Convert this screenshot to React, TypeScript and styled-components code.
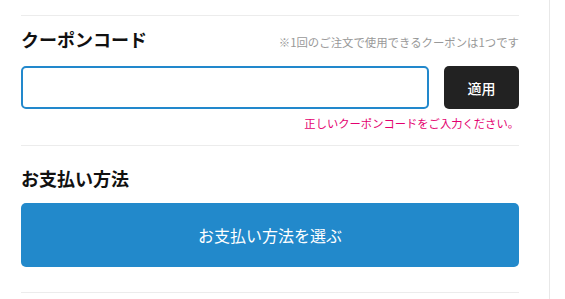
import React from 'react';
import styled, { createGlobalStyle } from 'styled-components';

const GlobalStyle = createGlobalStyle`
	* {
		box-sizing: border-box;
	}

	body {
		margin: 0;
		background: #fff;
		font-family: 'Noto Sans CJK JP', 'Noto Sans', sans-serif;
		color: #111;
	}
`;

const Page = styled.div`
	display: flex;
	height: 299px;
	overflow: hidden;
`;

const Main = styled.main`
	width: 550px;
	padding: 15px 30px 0 21px;
	border-right: 1px solid #e8e8e8;
`;

const Divider = styled.hr`
	margin: 0;
	border: none;
	border-top: 1px solid #ececec;
`;

const Section = styled.section<{ $top: number; $bottom: number }>`
	padding: ${p => p.$top}px 0 ${p => p.$bottom}px;
`;

const SectionHeader = styled.div`
	display: flex;
	justify-content: space-between;
	align-items: baseline;
`;

const Title = styled.h2`
	margin: 0;
	font-size: 18px;
	line-height: 24px;
	font-weight: 700;
	color: #111;
`;

const Note = styled.span`
	font-size: 11.4px;
	line-height: 16px;
	color: #999;
`;

const CouponRow = styled.div`
	display: flex;
	gap: 15px;
	margin-top: 15px;
`;

const CouponInput = styled.input`
	flex: 1;
	height: 43px;
	border: 2px solid #2288cc;
	border-radius: 5px;
	padding: 0 12px;
	font-size: 14px;
	font-family: inherit;
	outline: none;
`;

const ApplyButton = styled.button`
	width: 75px;
	height: 43px;
	border: none;
	border-radius: 5px;
	background: #222;
	color: #fff;
	font-family: inherit;
	font-size: 14px;
	font-weight: 500;
	cursor: pointer;
`;

const ErrorText = styled.p`
	margin: 6px 0 0;
	text-align: right;
	font-size: 11.3px;
	line-height: 16px;
	color: #e4006f;
`;

const PaymentButton = styled.button`
	display: block;
	width: 100%;
	height: 64px;
	margin-top: 13px;
	border: none;
	border-radius: 5px;
	background: #2289cb;
	color: #fff;
	font-family: inherit;
	font-size: 16px;
	cursor: pointer;
`;

const App = () => {
	const [code, setCode] = React.useState('');

	return (
		<Page>
			<GlobalStyle />
			<Main>
				<Divider />
				<Section $top={11} $bottom={14}>
					<SectionHeader>
						<Title>クーポンコード</Title>
						<Note>※1回のご注文で使用できるクーポンは1つです</Note>
					</SectionHeader>
					<CouponRow>
						<CouponInput value={code} onChange={e => setCode(e.target.value)} />
						<ApplyButton>適用</ApplyButton>
					</CouponRow>
					<ErrorText>正しいクーポンコードをご入力ください。</ErrorText>
				</Section>
				<Divider />
				<Section $top={20} $bottom={25}>
					<Title>お支払い方法</Title>
					<PaymentButton>お支払い方法を選ぶ</PaymentButton>
				</Section>
				<Divider />
			</Main>
		</Page>
	);
};

export default App;
